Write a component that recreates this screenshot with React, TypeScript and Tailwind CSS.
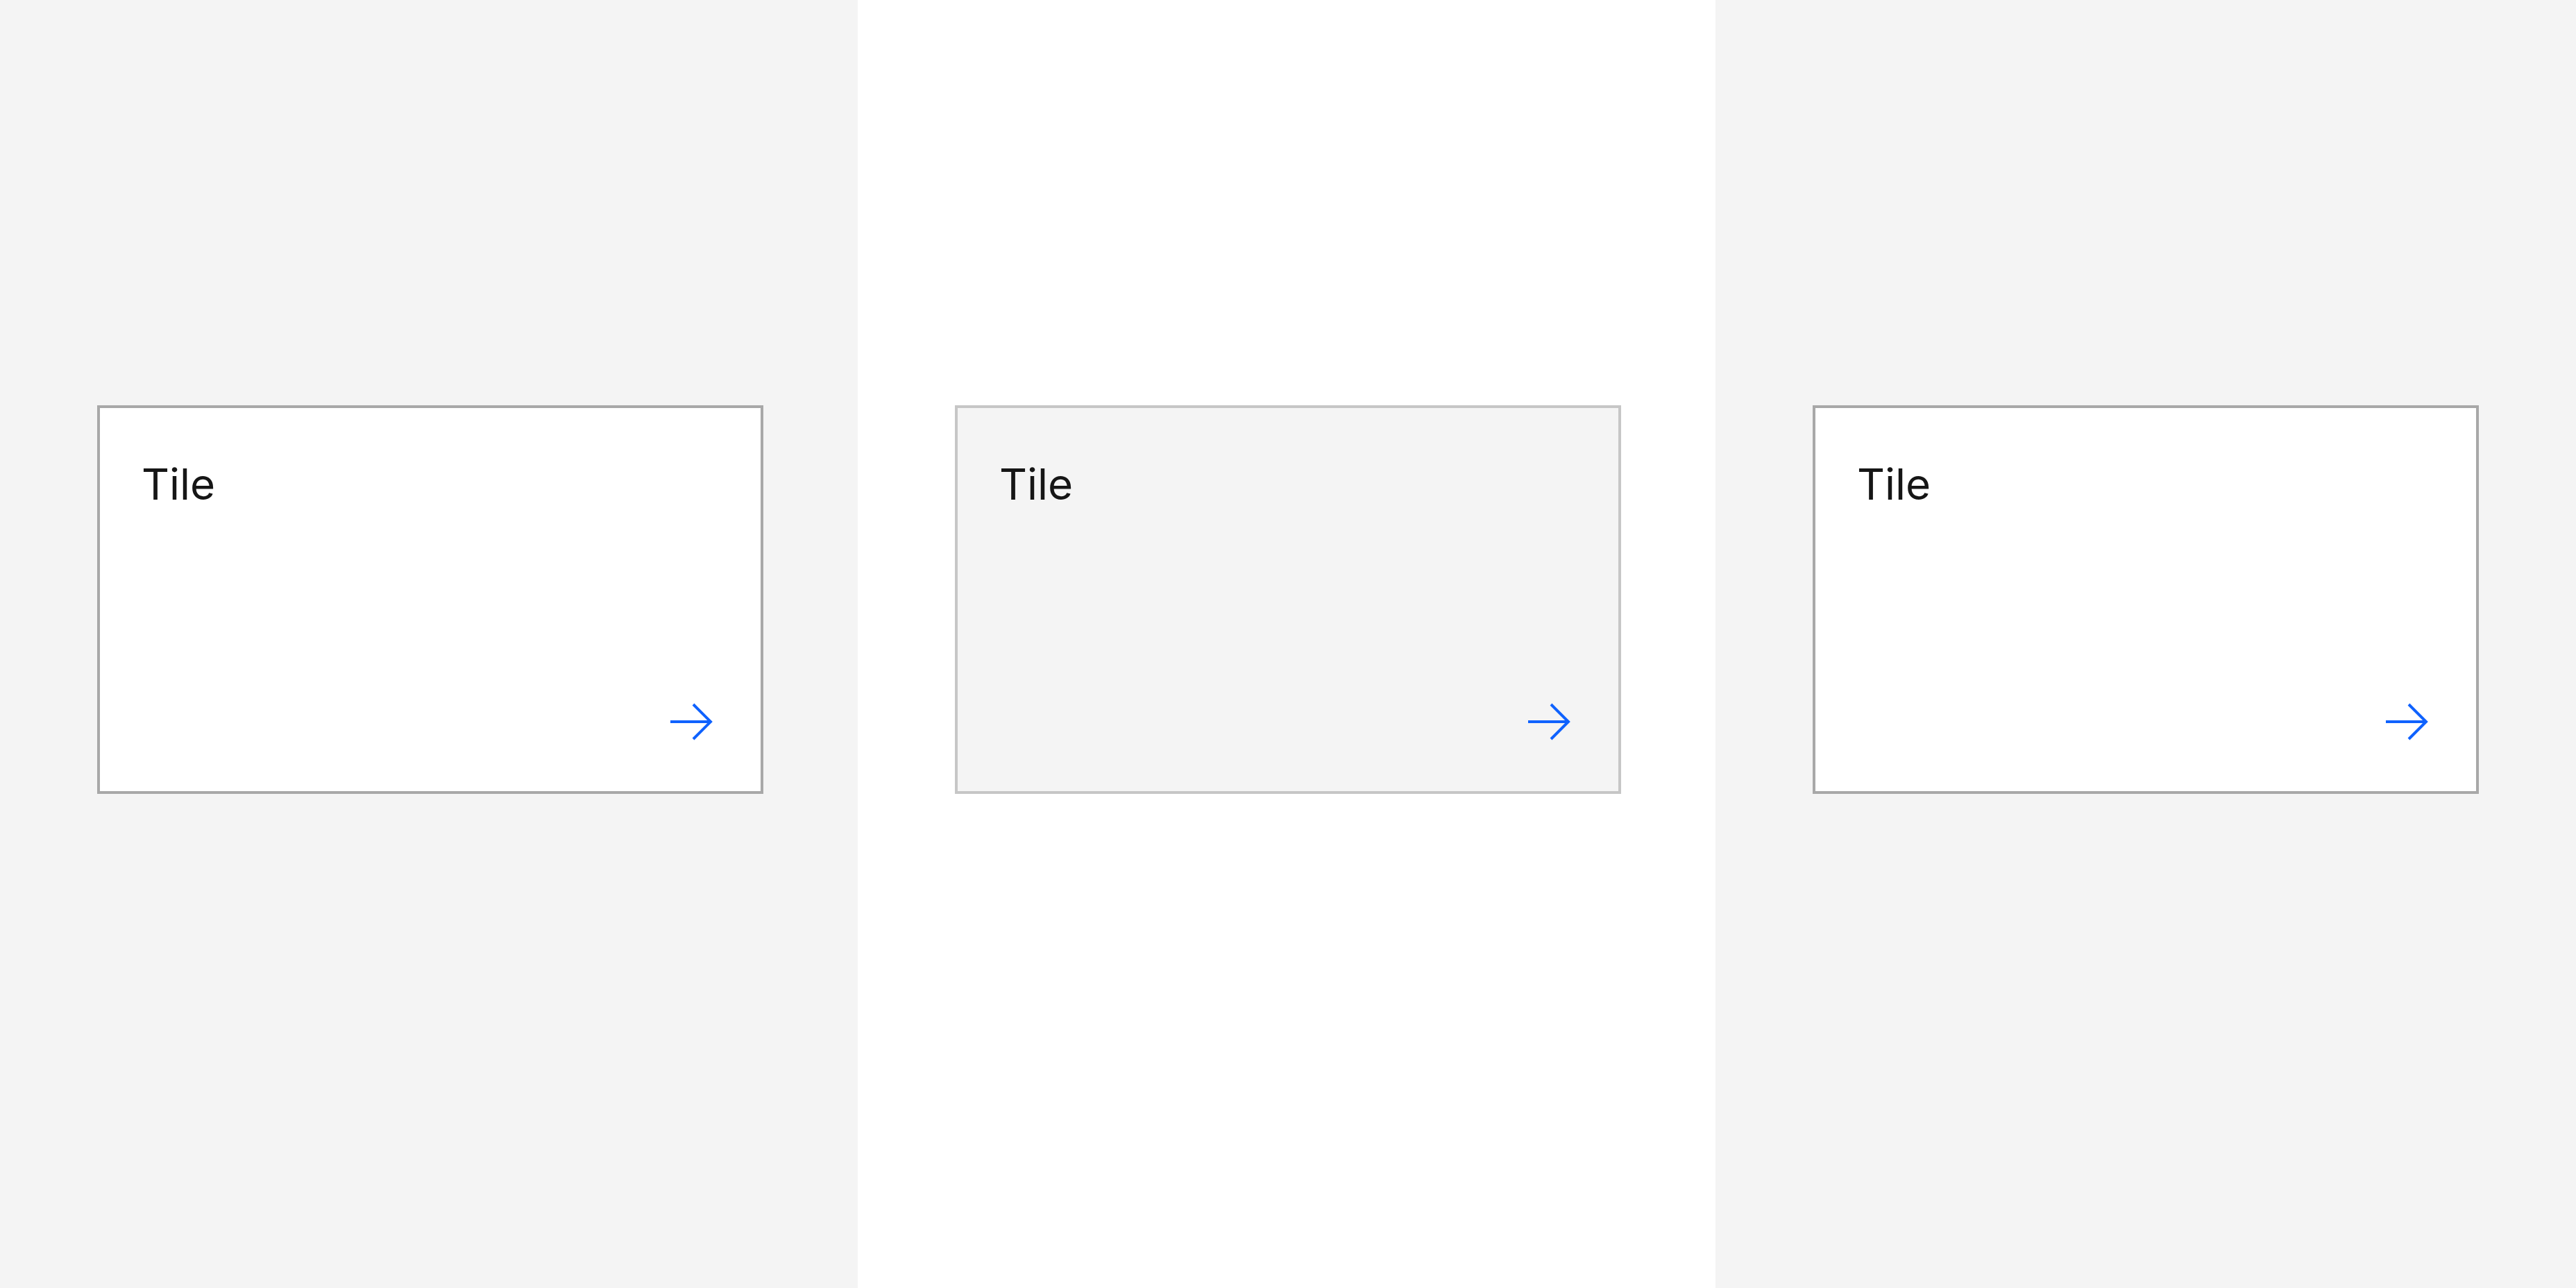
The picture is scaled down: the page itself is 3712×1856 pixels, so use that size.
import React from "react";

function Arrow() {
  return (
    <svg width="80" height="80" viewBox="0 0 80 80" fill="none" className="self-end">
      <path d="M14 44 H73" stroke="#0f62fe" strokeWidth="4" />
      <path d="M47 19 L72 44 L47 69" stroke="#0f62fe" strokeWidth="4" />
    </svg>
  );
}

function Tile({ bg, border }: { bg: string; border: string }) {
  return (
    <div
      className={`box-border w-[960px] h-[560px] border-4 ${border} ${bg} p-[64px] flex flex-col justify-between`}
    >
      <div
        className="text-[#161616] text-[62px] leading-[88px] tracking-[0px] mt-[2px] -ml-[4px]"
        style={{ fontFamily: "Inter, 'Noto Sans', sans-serif" }}
      >
        Tile
      </div>
      <div className="flex justify-end">
        <Arrow />
      </div>
    </div>
  );
}

export default function App() {
  return (
    <div className="flex w-[3712px] h-[1856px]">
      <div className="w-[1236px] h-full bg-[#f4f4f4] pl-[140px] pt-[584px]">
        <Tile bg="bg-white" border="border-[#a8a8a8]" />
      </div>
      <div className="w-[1236px] h-full bg-white pl-[140px] pt-[584px]">
        <Tile bg="bg-[#f4f4f4]" border="border-[#c6c6c6]" />
      </div>
      <div className="flex-1 h-full bg-[#f4f4f4] pl-[140px] pt-[584px]">
        <Tile bg="bg-white" border="border-[#a8a8a8]" />
      </div>
    </div>
  );
}
